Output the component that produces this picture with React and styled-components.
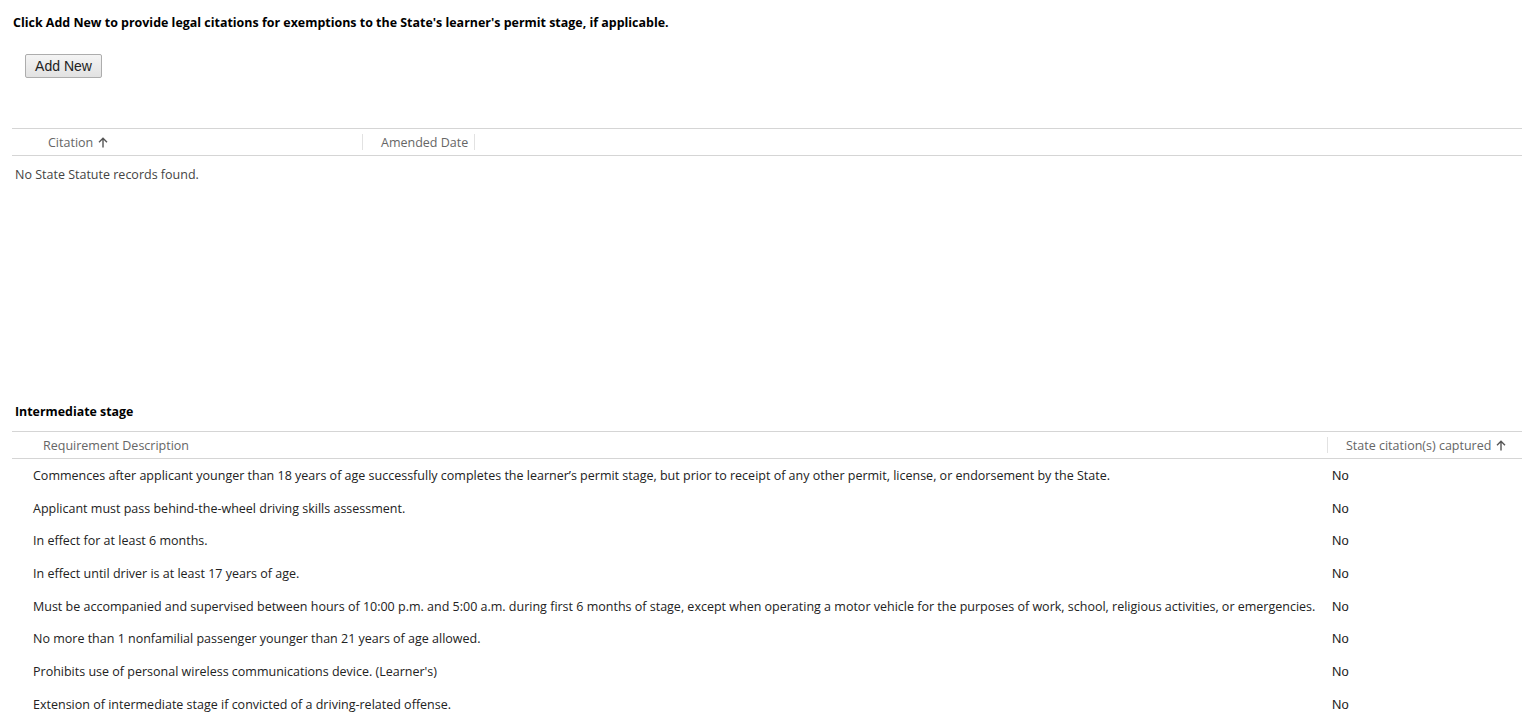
import React from "react";
import styled, { createGlobalStyle } from "styled-components";

const Global = createGlobalStyle`
  html, body {
    margin: 0;
    padding: 0;
    background: #fff;
  }
  body {
    font-family: "Open Sans", "Liberation Sans", sans-serif;
    color: #222;
  }
`;

const Page = styled.div`
  padding: 15px 0 0 12px;
`;

const Intro = styled.p`
  margin: 0 0 0 1px;
  font-size: 12.45px;
  font-weight: 700;
  color: #000;
  line-height: 16px;
`;

const ButtonRow = styled.div`
  padding: 23px 0 0 13px;
  height: 74px;
`;

const Button = styled.button`
  height: 24px;
  width: 77px;
  padding: 0;
  font-family: "Liberation Sans", Arial, sans-serif;
  font-size: 14px;
  color: #222;
  border: 1px solid #adadad;
  border-radius: 2px;
  background: linear-gradient(#f4f4f4, #e2e2e2);
`;

const Grid = styled.div`
  border-top: 1px solid #d5d5d5;
`;

const HeaderRow = styled.div`
  display: grid;
  grid-template-columns: ${(p) => p.$cols};
  height: 26px;
  align-items: center;
  border-bottom: 1px solid #d5d5d5;
`;

const HeadCell = styled.div`
  display: flex;
  align-items: center;
  gap: 5px;
  height: 16px;
  font-size: 12.5px;
  color: #666;
  padding-left: ${(p) => p.$pad || 18}px;
  border-left: ${(p) => (p.$sep ? "1px solid #e2e2e2" : "none")};
  border-right: ${(p) => (p.$sepRight ? "1px solid #e2e2e2" : "none")};
  padding-right: ${(p) => (p.$sepRight ? 6 : 0)}px;
  justify-self: start;
`;

const Empty = styled.div`
  padding: 10px 0 0 3px;
  font-size: 12.5px;
  color: #444;
  height: 237px;
`;

const SectionTitle = styled.div`
  padding: 0 0 11px 3px;
  font-size: 12.4px;
  font-weight: 700;
  color: #000;
`;

const Row = styled.div`
  display: grid;
  grid-template-columns: 1315px 1fr;
  height: 32.7px;
  align-items: center;
  font-size: 12.5px;
  color: #222;
`;

const Desc = styled.div`
  padding-left: 21px;
  white-space: nowrap;
`;

const Value = styled.div`
  padding-left: 5px;
  font-family: "Liberation Sans", Arial, sans-serif;
  font-size: 13px;
`;

const SortUp = () => (
  <svg width="10" height="11" viewBox="0 0 10 11" fill="none" stroke="#555" strokeWidth="1.4">
    <path d="M5 10.5V1.5M1 5.3L5 1.3l4 4" />
  </svg>
);

const rows = [
  "Commences after applicant younger than 18 years of age successfully completes the learner\u2019s permit stage, but prior to receipt of any other permit, license, or endorsement by the State.",
  "Applicant must pass behind-the-wheel driving skills assessment.",
  "In effect for at least 6 months.",
  "In effect until driver is at least 17 years of age.",
  "Must be accompanied and supervised between hours of 10:00 p.m. and 5:00 a.m. during first 6 months of stage, except when operating a motor vehicle for the purposes of work, school, religious activities, or emergencies.",
  "No more than 1 nonfamilial passenger younger than 21 years of age allowed.",
  "Prohibits use of personal wireless communications device. (Learner's)",
  "Extension of intermediate stage if convicted of a driving-related offense.",
];

export default function App() {
  return (
    <Page>
      <Global />
      <Intro>
        Click Add New to provide legal citations for exemptions to the State's learner's permit stage, if applicable.
      </Intro>
      <ButtonRow>
        <Button>Add New</Button>
      </ButtonRow>

      <Grid>
        <HeaderRow $cols="350px 1fr">
          <HeadCell $pad={36}>
            Citation <SortUp />
          </HeadCell>
          <HeadCell $sep $sepRight>Amended Date</HeadCell>
        </HeaderRow>
      </Grid>
      <Empty>No State Statute records found.</Empty>

      <SectionTitle>Intermediate stage</SectionTitle>
      <Grid>
        <HeaderRow $cols="1315px 1fr">
          <HeadCell $pad={31}>Requirement Description</HeadCell>
          <HeadCell $sep>
            State citation(s) captured <SortUp />
          </HeadCell>
        </HeaderRow>
        {rows.map((r) => (
          <Row key={r}>
            <Desc>{r}</Desc>
            <Value>No</Value>
          </Row>
        ))}
      </Grid>
    </Page>
  );
}
